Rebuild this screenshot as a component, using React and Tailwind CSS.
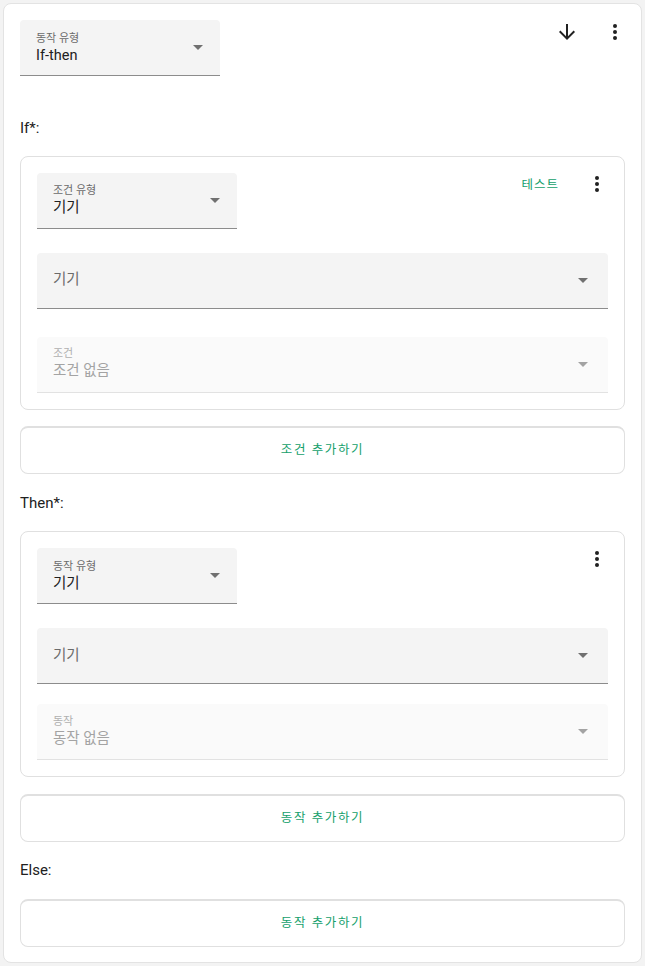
import React from 'react';

const font = { fontFamily: 'Roboto, "Noto Sans CJK KR", sans-serif' };

function Caret({ light }) {
  return (
    <svg width="10" height="5" viewBox="0 0 10 5" className="shrink-0">
      <path d="M0 0h10L5 5z" fill={light ? '#a3a3a3' : '#707070'} />
    </svg>
  );
}

function Dots() {
  return (
    <svg width="24" height="24" viewBox="0 0 24 24" className="text-[#212121]">
      <circle cx="12" cy="6" r="2" fill="currentColor" />
      <circle cx="12" cy="12" r="2" fill="currentColor" />
      <circle cx="12" cy="18" r="2" fill="currentColor" />
    </svg>
  );
}

function Select({ label, value }) {
  return (
    <div className="w-[200px] h-[56px] bg-[#f4f4f4] rounded-t border-b border-[#8c8c8c] flex items-center pl-4 pr-[17px]">
      <div className="flex-1 flex flex-col">
        <span className="text-[11px] leading-[14px] text-[#6b6b6b] mt-[2px]">{label}</span>
        <span className="text-[14.5px] leading-[20px] text-[#212121]">{value}</span>
      </div>
      <Caret />
    </div>
  );
}

function EmptySelect({ label }) {
  return (
    <div className="w-full h-[56px] bg-[#f4f4f4] rounded-t border-b border-[#8c8c8c] flex items-center pl-4 pr-[20px]">
      <span className="flex-1 text-[14.5px] text-[#6b6b6b]">{label}</span>
      <Caret />
    </div>
  );
}

function DisabledSelect({ label, value }) {
  return (
    <div className="w-full h-[56px] bg-[#fafafa] rounded-t border-b border-[#e2e2e2] flex items-center pl-4 pr-[20px]">
      <div className="flex-1 flex flex-col">
        <span className="text-[11px] leading-[14px] text-[#b0b0b0]">{label}</span>
        <span className="text-[14.5px] leading-[20px] text-[#a3a3a3]">{value}</span>
      </div>
      <Caret light />
    </div>
  );
}

function AddButton({ children }) {
  return (
    <div className="h-[48px] rounded-lg border border-[#e0e0e0] border-t-2 flex items-center justify-center text-[12.5px] text-[#14a06b] tracking-[1.6px]">
      {children}
    </div>
  );
}

function Card({ typeLabel, value, test, fieldLabel, subLabel, subValue, subGap }) {
  return (
    <div className="rounded-lg border border-[#e0e0e0] px-4 pt-4 pb-[16px]">
      <div className="flex items-start">
        <Select label={typeLabel} value={value} />
        <div className="flex-1" />
        {test && <span className="text-[12.5px] tracking-[1px] text-[#14a06b] mt-[3px] mr-[26px]">{test}</span>}
        <div className="-mt-[1px] -mr-[1px]">
          <Dots />
        </div>
      </div>
      <div className="mt-6">
        <EmptySelect label={fieldLabel} />
      </div>
      <div className={subGap}>
        <DisabledSelect label={subLabel} value={subValue} />
      </div>
    </div>
  );
}

export default function App() {
  return (
    <div className="min-h-screen bg-[#f3f3f3] p-[3px]" style={font}>
      <div className="bg-white rounded-lg border border-[#e3e3e3] px-4 pt-4 pb-4 h-[960px]">
        <div className="flex items-start">
          <Select label="동작 유형" value="If-then" />
          <div className="flex-1" />
          <div className="flex items-center gap-[24px] -mr-[2px]">
            <svg width="24" height="24" viewBox="0 0 24 24">
              <path d="M20 12l-1.41-1.41L13 16.17V4h-2v12.17l-5.58-5.59L4 12l8 8 8-8z" fill="#212121" />
            </svg>
            <Dots />
          </div>
        </div>

        <div className="mt-[41px] text-[15px] text-[#212121]">If*:</div>
        <div className="mt-[16px]">
          <Card
            typeLabel="조건 유형"
            value="기기"
            test="테스트"
            fieldLabel="기기"
            subLabel="조건"
            subValue="조건 없음"
            subGap="mt-[28px]"
          />
        </div>
        <div className="mt-4">
          <AddButton>조건 추가하기</AddButton>
        </div>

        <div className="mt-[18px] text-[15px] text-[#212121]">Then*:</div>
        <div className="mt-[17px]">
          <Card
            typeLabel="동작 유형"
            value="기기"
            fieldLabel="기기"
            subLabel="동작"
            subValue="동작 없음"
            subGap="mt-[20px]"
          />
        </div>
        <div className="mt-[17px]">
          <AddButton>동작 추가하기</AddButton>
        </div>

        <div className="mt-[17px] text-[15px] text-[#212121]">Else:</div>
        <div className="mt-[17px]">
          <AddButton>동작 추가하기</AddButton>
        </div>
      </div>
    </div>
  );
}
